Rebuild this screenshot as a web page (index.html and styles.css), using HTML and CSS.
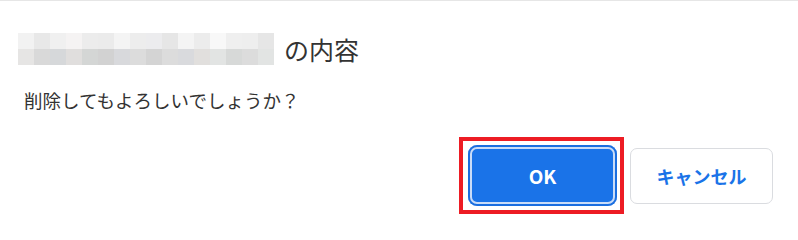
FILE: index.html
```html
<!DOCTYPE html>
<html lang="ja">
<head>
<meta charset="utf-8">
<link rel="stylesheet" href="styles.css">
</head>
<body>
<div class="dialog">
  <div class="title-row">
    <div class="blur" aria-hidden="true"><div class="blur-row r1"></div><div class="blur-row r2"></div></div>
    <span class="title-text">の内容</span>
  </div>
  <p class="message">削除してもよろしいでしょうか？</p>
  <div class="actions">
    <div class="highlight">
      <button class="btn btn-ok" type="button">OK</button>
    </div>
    <button class="btn btn-cancel" type="button">キャンセル</button>
  </div>
</div>
</body>
</html>
```
FILE: styles.css
```css
html, body {
  margin: 0;
  padding: 0;
  background: #fff;
}
body {
  width: 798px;
  height: 230px;
  overflow: hidden;
  border-top: 1px solid #e6e6e6;
  box-sizing: border-box;
  font-family: "Noto Sans CJK JP", "Noto Sans", sans-serif;
  color: #333;
}
.dialog {
  padding: 32px 25px 0 24px;
  display: flex;
  flex-direction: column;
}
.title-row {
  display: flex;
  align-items: center;
  height: 32px;
}
.blur {
  margin-left: -6px;
  width: 256px;
  height: 32px;
  display: flex;
  flex-direction: column;
}
.blur-row {
  height: 16px;
}
.r1 {
  background: linear-gradient(to right,
    #f2f2f2 0 16px, #e8e8e8 16px 32px, #f0f0f0 32px 48px, #f5f3f3 48px 64px,
    #ececec 64px 80px, #ebebeb 80px 96px, #f4f4f4 96px 112px, #ededed 112px 128px,
    #ececee 128px 144px, #e6e6e6 144px 160px, #f4f4f4 160px 176px, #ececec 176px 192px,
    #f8f8f8 192px 208px, #efefef 208px 224px, #eeeeee 224px 240px, #e6e6e6 240px 256px);
}
.r2 {
  background: linear-gradient(to right,
    #e6e5e4 0 16px, #d9d9d9 16px 32px, #d6d8da 32px 48px, #e0dedd 48px 64px,
    #d4d6d5 64px 80px, #d2d2d2 80px 96px, #d8d9dc 96px 112px, #dcdcdc 112px 128px,
    #d4d4d4 128px 144px, #dcdcdc 144px 160px, #d9dadd 160px 176px, #e1dfdd 176px 192px,
    #e2e4e3 192px 208px, #d7d9d8 208px 224px, #dcdcdc 224px 240px, #e2e4e3 240px 256px);
}
.title-text {
  margin-left: 10px;
  font-size: 25px;
  line-height: 32px;
  color: #333;
}
.message {
  margin: 21px 0 0;
  font-size: 18.5px;
  line-height: 28px;
  color: #333;
}
.actions {
  margin-top: 23px;
  display: flex;
  justify-content: flex-end;
  align-items: center;
  gap: 6px;
}
.highlight {
  border: 4px solid #ed1c24;
  padding: 4px 3px 4px 5px;
  display: flex;
}
.btn {
  font-family: "Noto Sans CJK JP", "Noto Sans", sans-serif;
  font-weight: 700;
  font-size: 18px;
  border-radius: 7px;
  cursor: pointer;
  padding: 0;
}
.btn-ok {
  width: 149px;
  height: 61px;
  border: 0;
  border-radius: 9px;
  background: #1a73e8;
  color: #fff;
  font-size: 19px;
  box-shadow: inset 0 0 0 2px #1a6ee0, inset 0 0 0 4px #c9dcf8;
}
.btn-cancel {
  width: 143px;
  height: 56px;
  border: 1px solid #dadce0;
  background: #fff;
  color: #1a73e8;
}
```
